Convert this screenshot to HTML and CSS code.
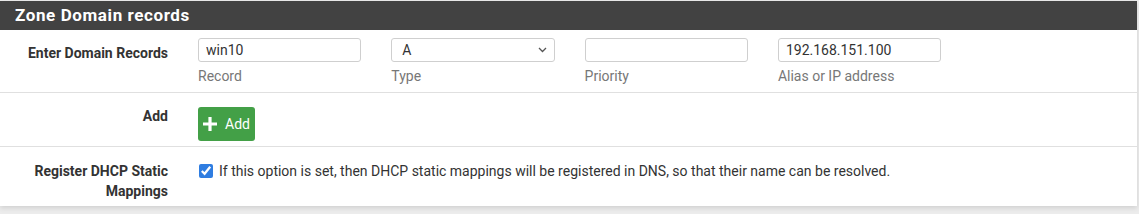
FILE: index.html
```html
<!DOCTYPE html>
<html>
<head>
<meta charset="utf-8">
<link rel="stylesheet" href="styles.css">
</head>
<body>
<div class="panel">
  <div class="panel-heading">Zone Domain records</div>
  <div class="row row-records">
    <div class="label label-records">Enter Domain Records</div>
    <div class="fields">
      <div class="field">
        <input class="control" type="text" value="win10">
        <div class="help">Record</div>
      </div>
      <div class="field">
        <div class="select-wrap">
          <select class="control select"><option>A</option></select>
          <svg class="chevron" width="9" height="6" viewBox="0 0 9 6"><path d="M1 1 L4.5 4.5 L8 1" fill="none" stroke="#555" stroke-width="1.3"/></svg>
        </div>
        <div class="help">Type</div>
      </div>
      <div class="field">
        <input class="control" type="text" value="">
        <div class="help">Priority</div>
      </div>
      <div class="field">
        <input class="control" type="text" value="192.168.151.100">
        <div class="help">Alias or IP address</div>
      </div>
    </div>
  </div>
  <div class="row row-add">
    <div class="label label-add">Add</div>
    <div class="content">
      <button class="btn-add" type="button">
        <svg class="plus" width="14" height="14" viewBox="0 0 14 14"><path d="M7 0 V14 M0 7 H14" stroke="#fff" stroke-width="3.2"/></svg>
        <span>Add</span>
      </button>
    </div>
  </div>
  <div class="row row-dhcp">
    <div class="label label-dhcp">Register DHCP Static<br>Mappings</div>
    <div class="content check-line">
      <input class="check" type="checkbox" checked>
      <span>If this option is set, then DHCP static mappings will be registered in DNS, so that their name can be resolved.</span>
    </div>
  </div>
</div>
</body>
</html>
```
FILE: styles.css
```css
html, body {
  margin: 0;
  padding: 0;
}
body {
  background: #ececec;
  font-family: Roboto, "Liberation Sans", sans-serif;
  font-size: 14px;
  color: #333;
  width: 1139px;
  height: 214px;
  overflow: hidden;
}
.panel {
  width: 1137px;
  margin-top: 1px;
  background: #fff;
  box-shadow: 0 2px 5px rgba(0, 0, 0, 0.12);
}
.panel-heading {
  height: 29px;
  line-height: 29px;
  background: #424242;
  color: #fff;
  font-weight: 700;
  font-size: 17px;
  letter-spacing: 0.6px;
  padding-left: 15px;
}
.row {
  display: flex;
  border-top: 1px solid #e0e0e0;
  line-height: 20px;
}
.row-records {
  border-top: none;
  height: 62px;
}
.row-add {
  height: 53px;
}
.row-dhcp {
  height: 59px;
}
.label {
  width: 168px;
  padding-right: 15px;
  flex: none;
  text-align: right;
  font-weight: 700;
  color: #333;
}
.label-records { padding-top: 13px; }
.label-add { padding-top: 13px; }
.label-dhcp { padding-top: 14px; }
.fields {
  display: grid;
  grid-template-columns: repeat(4, 163.3px);
  column-gap: 30px;
  padding-left: 15px;
  padding-top: 8px;
}
.control {
  display: block;
  box-sizing: border-box;
  width: 100%;
  height: 24px;
  margin: 0;
  border: 1px solid #cfcfcf;
  border-radius: 3px;
  background: #fff;
  font-family: Roboto, "Liberation Sans", sans-serif;
  font-size: 14px;
  color: #333;
  padding: 0 7px;
  outline: none;
}
.select-wrap {
  position: relative;
}
.select {
  appearance: none;
  -webkit-appearance: none;
  padding-left: 10px;
}
.chevron {
  position: absolute;
  right: 8px;
  top: 9px;
}
.help {
  margin-top: 4px;
  color: #777;
  line-height: 20px;
}
.content {
  padding-left: 15px;
}
.row-add .content {
  padding-top: 14px;
}
.btn-add {
  display: flex;
  align-items: center;
  height: 34px;
  width: 57px;
  box-sizing: border-box;
  margin: 0;
  padding: 0 0 0 5px;
  border: none;
  border-radius: 3px;
  background: #43a047;
  color: #fff;
  font-family: Roboto, "Liberation Sans", sans-serif;
  font-size: 14px;
}
.plus {
  margin-right: 8px;
}
.check-line {
  display: flex;
  align-items: center;
  padding-top: 14px;
  height: 20px;
}
.check {
  width: 14px;
  height: 14px;
  margin: 0 6px 0 1px;
  accent-color: #2f7de1;
}
```
